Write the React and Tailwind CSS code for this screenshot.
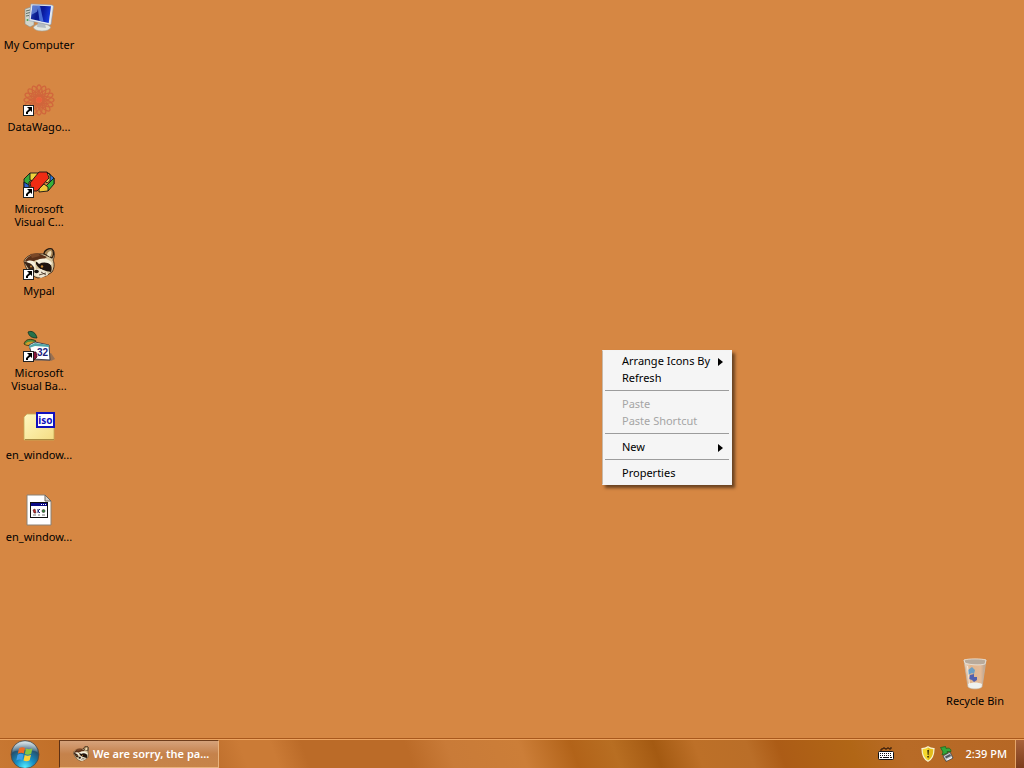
import React from 'react';

/* Small arrow badge on the corner of shortcut icons */
const ShortcutArrow = () => (
  <g>
    <rect x="0.5" y="21.5" width="10" height="10" fill="#fff" stroke="#222" />
    <path d="M4 23h5v5L7.400 26.400 5 28.600V30H3v-2l3-3z" fill="#000" />
  </g>
);

const ComputerIcon = () => (
  <svg width="32" height="32" viewBox="0 0 32 32" aria-hidden="true">
    <defs>
      <linearGradient id="screen" x1="0" y1="0" x2="1" y2="0.25">
        <stop offset="0" stopColor="#2747b8" />
        <stop offset="0.4" stopColor="#0a1a8c" />
        <stop offset="0.65" stopColor="#0a1a9c" />
        <stop offset="1" stopColor="#1438d8" />
      </linearGradient>
    </defs>
    <path d="M2 7l6-2 3 1v17l-4 2-5-3z" fill="#d3d6cc" stroke="#8c8f88" strokeWidth="0.6" />
    <path d="M3 9l4-1M3 11.500l4-1M3 14l3-.5" stroke="#5c6b62" />
    <circle cx="4.500" cy="18" r="1" fill="#45a850" />
    <ellipse cx="19" cy="25.500" rx="8.500" ry="3.500" fill="#e3e6df" stroke="#9da39a" strokeWidth="0.6" />
    <path d="M15 20l7 2 1 4-9-1z" fill="#b4bcc0" />
    <path d="M8 2l21 1 1.500 1-2.500 18.500-1.500.5L6 18.500z" fill="#e2e8ef" stroke="#8a98ac" strokeWidth="0.6" />
    <path d="M9.500 3.500l18.500.8-2.300 16.600L7.800 17z" fill="url(#screen)" />
    <path d="M9.500 3.500l6.500.3-2 6-5.500 3z" fill="#86a8ec" opacity="0.6" />
    <path d="M14.500 3.700l2.500.1 3.500 15.800-4-.8z" fill="#5f8ce8" opacity="0.75" />
  </svg>
);

const AtomIcon = () => (
  <svg width="32" height="32" viewBox="0 0 32 32" aria-hidden="true">
    <g fill="none" stroke="#cf5038" strokeWidth="1.300" opacity="0.6">
      {[0, 22.5, 45, 67.5, 90, 112.5, 135, 157.5].map((angle) => (
        <ellipse key={angle} cx="16" cy="16" rx="15" ry="4" transform={`rotate(${angle} 16 16)`} />
      ))}
      <circle cx="16" cy="16" r="9" strokeDasharray="2 2" />
    </g>
    <circle cx="16" cy="16" r="3" fill="#e8603c" />
    <ShortcutArrow />
  </svg>
);

const VisualCIcon = () => (
  <svg width="32" height="32" viewBox="0 0 32 32" aria-hidden="true">
    <g stroke="#151515" strokeWidth="0.9" strokeLinejoin="round">
      <path d="M7 7L1 13v8l5 3v-8l4-3z" fill="#3aa83a" />
      <path d="M1 16l5 3v5l-5-3z" fill="#2a62d0" />
      <path d="M7 7h8l1 4-5 4-4-1z" fill="#f0d23c" />
      <path d="M20 13l4-6 3 1 1 6-4 3z" fill="#f2d95c" />
      <path d="M24 6l7 6v6l-4-3V9z" fill="#2f78d8" />
      <path d="M31 12v6l-6 7-3-4 5-5z" fill="#37b13a" />
      <path d="M16 22l5-4 4 3v4l-9 1z" fill="#f0c83a" />
      <path d="M16 6h8l2 6-10 11-2 2H9l-2-8z" fill="#ee2c14" />
    </g>
    <ShortcutArrow />
  </svg>
);

const RaccoonHead = () => (
  <g>
    <path d="M1 13c2-5 8-8 20-7 1-4 5-6 8-5 3 2 3 7 1 11 2 4 1 9-1 12l-6 4-8 2C7 28 2 20 1 13z" fill="#d9c7a0" stroke="#2b1b10" strokeWidth="0.8" />
    <path d="M2 13C4 8 11 6 17 6l7 3-3 2-8 1-7 4z" fill="#5c3119" />
    <path d="M7 6l8-1 2 3-8 2z" fill="#7b4827" />
    <path d="M21 6c0-4 5-6 8-5 2 2 2 6 0 9z" fill="#a78658" stroke="#2b1b10" strokeWidth="1.200" />
    <path d="M24 7c0-2 2-4 4-4 1 2 0 4-1 6z" fill="#eadcb8" />
    <path d="M1 14c4-1 8-1 10 2l0 6-4 1z" fill="#3a2417" />
    <path d="M13 14c5-2 10-2 14 2 2 2 2 5 1 8-5-1-12-2-15-8z" fill="#20140e" />
    <path d="M3 14c3-2 7-2 9 1l1 7-3-4c-2-3-4-3-7-4zM13 13c6-4 12-3 16 2l-1 2c-4-3-8-3-12-1z" fill="#f7f0dc" />
    <circle cx="8" cy="18.500" r="1" fill="#c98936" />
    <circle cx="19" cy="18.500" r="1.200" fill="#c98936" />
    <path d="M12 21l6 0 6 3 1 3-7 3-7-3z" fill="#efe6d2" />
    <ellipse cx="13.500" cy="23.500" rx="2.300" ry="1.800" fill="#16100c" />
    <path d="M16 27l7-2M18 24l5 3" fill="none" stroke="#3c2a1c" strokeWidth="0.8" />
  </g>
);

const MypalIcon = () => (
  <svg width="32" height="32" viewBox="0 0 32 32" aria-hidden="true">
    <RaccoonHead />
    <ShortcutArrow />
  </svg>
);

const VisualBasicIcon = () => (
  <svg width="32" height="32" viewBox="0 0 32 32" aria-hidden="true">
    <path d="M8 31l20 0 4-2-4-6z" fill="#70635c" opacity="0.6" />
    <path d="M5 2c4-2 8 1 9 6-4 0-8-1-9-6z" fill="#26714a" stroke="#12301f" strokeWidth="0.8" />
    <path d="M1 14c1-5 7-6 12-3-2 4-8 6-12 3z" fill="#4c8a40" stroke="#3a2c08" strokeWidth="0.8" />
    <path d="M2 14c2-3 7-3 10-2-3 3-7 4-10 2z" fill="#d09a27" />
    <path d="M6 15l6-3 14 3 1 15-17-1z" fill="#fff" stroke="#334" strokeWidth="0.9" />
    <path d="M6 16l6-3 14 2 0 2-14-1-6 2z" fill="#50a6a8" />
    <path d="M9 22l4 0 1 5-3 3z" fill="#8b1237" stroke="#35091b" strokeWidth="0.8" />
    <text x="14" y="26" fontFamily="Liberation Sans, sans-serif" fontWeight="700" fontSize="10" fill="#21217c">32</text>
    <ShortcutArrow />
  </svg>
);

const IsoIcon = () => (
  <svg width="32" height="32" viewBox="0 0 32 32" aria-hidden="true">
    <defs>
      <linearGradient id="folder" x1="0" y1="0" x2="1" y2="1">
        <stop offset="0" stopColor="#fff8c0" />
        <stop offset="1" stopColor="#f4dc83" />
      </linearGradient>
    </defs>
    <path d="M1 28V5l3-3h9l3 3h15v23z" fill="url(#folder)" stroke="#c6a957" strokeWidth="0.8" />
    <path d="M2 27.500h29" stroke="#a88b42" />
    <rect x="14" y="1" width="17" height="14" fill="#fff" stroke="#1111bd" strokeWidth="2" />
    <text x="22.500" y="12" textAnchor="middle" fontFamily="Noto Sans, sans-serif" fontWeight="700" fontSize="10" fill="#1111bd">iso</text>
  </svg>
);

const DocumentIcon = () => (
  <svg width="32" height="32" viewBox="0 0 32 32" aria-hidden="true">
    <path d="M4 1h18l6 6v24H4z" fill="#fff" stroke="#8a8176" />
    <path d="M22 1v6h6z" fill="#d7d3cc" stroke="#6e675f" />
    <rect x="7.500" y="8.500" width="17" height="15" fill="#fff" stroke="#111" />
    <path d="M8 9h16v3H8z" fill="#0b0b86" />
    <path d="M18 10.500h1M20 10.500h1M22 10.500h1" stroke="#fff" />
    <path d="M10 16l2-1 1 4-2 0z" fill="#c02929" stroke="#502020" strokeWidth="0.6" />
    <path d="M15 15v4M17 15l-2 2 2 2" fill="none" stroke="#1b2470" />
    <circle cx="20.500" cy="17" r="1.500" fill="#278a3c" stroke="#402828" strokeWidth="0.6" />
    <path d="M10 21h3M15 21h2M19 21h3" stroke="#777" />
  </svg>
);

const RecycleIcon = () => (
  <svg width="32" height="32" viewBox="0 0 32 32" aria-hidden="true">
    <defs>
      <linearGradient id="glass" x1="0" y1="0" x2="1" y2="0">
        <stop offset="0" stopColor="#f0e9e0" stopOpacity="0.9" />
        <stop offset="0.3" stopColor="#e6c9ac" stopOpacity="0.7" />
        <stop offset="0.75" stopColor="#e9d0ba" stopOpacity="0.7" />
        <stop offset="1" stopColor="#a8998c" stopOpacity="0.95" />
      </linearGradient>
    </defs>
    <path d="M5 2l22 0-4 27c-3 2.500-11 2.500-14 0z" fill="url(#glass)" stroke="#c2b5a7" strokeWidth="0.8" />
    <path d="M5 2c5-1.500 17-1.500 22 0l-1 4c-4 1.500-16 1-20-1z" fill="#b9aa9a" stroke="#eee8df" strokeWidth="0.8" />
    <path d="M9 26c4-2 10-2 14 0l-.5 3c-3 2-10 2-13 0z" fill="#eef1ef" />
    <path d="M9 12l4-3 3 3-1 4-2-1-4 2z" fill="#6d9fc4" />
    <path d="M11 17l4-1 0 3 3 0 0 3-3 2-2-2-3-1z" fill="#5360ae" />
    <path d="M8.500 8l2 18" stroke="#fff" opacity="0.6" />
  </svg>
);

const StartOrb = () => (
  <svg width="30" height="30" viewBox="0 0 30 30" aria-hidden="true">
    <defs>
      <radialGradient id="orb" cx="0.5" cy="0.95" r="0.95">
        <stop offset="0" stopColor="#53edff" />
        <stop offset="0.35" stopColor="#168fc5" />
        <stop offset="0.7" stopColor="#25516f" />
        <stop offset="1" stopColor="#9ab5bd" />
      </radialGradient>
      <linearGradient id="gloss" x1="0" y1="0" x2="0" y2="1">
        <stop offset="0" stopColor="#fff" stopOpacity="0.7" />
        <stop offset="1" stopColor="#fff" stopOpacity="0.1" />
      </linearGradient>
    </defs>
    <circle cx="15" cy="15.500" r="14" fill="url(#orb)" stroke="#5b4638" strokeWidth="0.8" />
    <path d="M2.500 13C3 6 8.500 2.500 15 2.500S27 6 27.500 13c-5-2.500-20-2.500-25 0z" fill="url(#gloss)" />
    <path d="M9 9.500c2-1.500 4-1.500 6-.5l-1.200 5.500c-2-1-4-.8-6 .3z" fill="#ef6a24" />
    <path d="M16 9.500c2 1 4 1 6.500-.3l-1.300 5.500c-2 1.200-4.300 1.200-6.300.2z" fill="#8ac63f" />
    <path d="M7.500 15.800c2-1.200 4-1.200 6-.3l-1.200 5.500c-2-.8-4-.8-6 .4z" fill="#3f9ee8" />
    <path d="M14.700 16c2 1 4 1 6.300-.2l-1.300 5.500c-2 1.200-4.200 1.200-6.200.2z" fill="#fdd137" />
  </svg>
);

const KeyboardIcon = () => (
  <svg width="16" height="16" viewBox="0 0 16 16" role="img" aria-label="Keyboard">
    <path d="M3 5V3h2V2h2v1h2V2h2v1h2V1" fill="none" stroke="#2a1508" />
    <rect x="0.5" y="5.500" width="15" height="8" rx="1" fill="#fff" stroke="#111" />
    <path d="M2 7.500h12M2 9.500h12" stroke="#111" strokeDasharray="1 1" />
    <path d="M2 11.500h2M5 11.500h6M12 11.500h2" stroke="#111" />
  </svg>
);

const ShieldIcon = () => (
  <svg width="14" height="16" viewBox="0 0 14 16" role="img" aria-label="Security alert">
    <path d="M7 .8C5.300 2 3 2.600 1 2.600 1 9 2.500 13 7 15.300 11.500 13 13 9 13 2.600 11 2.600 8.700 2 7 .8z" fill="#f5d82e" stroke="#f7f1d0" strokeWidth="1.200" />
    <path d="M7 1.800v12.400C10.500 12 12 9 12 3.500 10 3.500 8.500 3 7 1.800z" fill="#e2bb1c" />
    <path d="M6.300 4h1.600l-.4 5h-.8zM6.300 10h1.500v1.500H6.300z" fill="#2b2107" />
  </svg>
);

const DeviceIcon = () => (
  <svg width="16" height="16" viewBox="0 0 16 16" role="img" aria-label="Safely remove hardware">
    <path d="M4 10l7-4 3 6-7 3.500z" fill="#c9cdd0" stroke="#3c4247" strokeWidth="0.8" />
    <path d="M6 10.500l5-2.500 1 2-5 2.500z" fill="#4f585e" />
    <path d="M8 14l5-2.500" stroke="#fff" />
    <path d="M1.500 1.500l5-1 .5 2c3-1 5 0 5 3L8 5.500 8.500 7 3 9l1-3z" fill="#32a83c" stroke="#12611b" strokeWidth="0.7" />
  </svg>
);

const desktopItems = [
  { label: 'My Computer', Icon: ComputerIcon },
  { label: 'DataWago...', Icon: AtomIcon },
  { label: 'Microsoft Visual C...', Icon: VisualCIcon },
  { label: 'Mypal', Icon: MypalIcon },
  { label: 'Microsoft Visual Ba...', Icon: VisualBasicIcon },
  { label: 'en_window...', Icon: IsoIcon },
  { label: 'en_window...', Icon: DocumentIcon },
];

const menuGroups = [
  [{ label: 'Arrange Icons By', submenu: true }, { label: 'Refresh' }],
  [{ label: 'Paste', disabled: true }, { label: 'Paste Shortcut', disabled: true }],
  [{ label: 'New', submenu: true }],
  [{ label: 'Properties' }],
];

const DesktopItem = ({ label, Icon }) => (
  <button className="flex h-[82px] w-[78px] flex-col items-center gap-1 pt-[2px] text-[11px] leading-[13px] text-black">
    <Icon />
    <span className="w-[72px] text-center">{label}</span>
  </button>
);

const ContextMenu = () => (
  <div
    role="menu"
    className="absolute left-[602px] top-[350px] min-w-[130px] border border-[#f4f4f4] border-l-[#c9b9a8] bg-[#f5f5f5] px-[2px] py-[2px] text-[11px] shadow-[3px_3px_3px_rgba(0,0,0,0.5)]"
  >
    {menuGroups.map((group, i) => (
      <div key={i} role="group">
        {i > 0 && <hr className="mb-[5px] mt-[3px] border-t border-[#9c9c9c]" />}
        {group.map(({ label, submenu, disabled }) => (
          <button
            key={label}
            role="menuitem"
            disabled={disabled}
            className="flex h-[17px] w-full items-center justify-between gap-2 pl-[17px] pr-[6px] text-black disabled:text-[#a5a5a5]"
          >
            <span className="whitespace-nowrap">{label}</span>
            {submenu && (
              <svg width="5" height="8" viewBox="0 0 5 8" aria-hidden="true">
                <path d="M0 0l5 4-5 4z" fill="#000" />
              </svg>
            )}
          </button>
        ))}
      </div>
    ))}
  </div>
);

const Taskbar = () => (
  <footer className="flex h-[30px] items-stretch border-t border-[#a9581c] bg-[linear-gradient(70deg,#c87833_0%,#c27029_6%,#bb6c2a_20%,#cb7b36_24%,#cb7b36_27%,#bb6b28_30%,#bb6b28_40%,#c97b38_44%,#cc7e38_51%,#b26319_56%,#b86e22_60%,#a45a12_64%,#bd7028_68%,#ba6e28_73%,#ac5c16_76%,#b16616_83%,#b86b27_88%,#b66725_100%)]">
    <div className="flex w-full items-stretch border-t border-[#eda562]">
      <button aria-label="Start" className="flex w-[59px] shrink-0 items-center pl-[10px]">
        <StartOrb />
      </button>
      <button className="flex w-[160px] items-center gap-1 border border-[#e9b27c] border-l-[#5e3013] border-t-[#6e3d1b] bg-linear-to-b from-[#d5a27b] via-[#c5824b] to-[#c78449] pl-[13px] text-[11px] font-semibold text-white">
        <svg width="16" height="16" viewBox="0 0 32 32" aria-hidden="true">
          <RaccoonHead />
        </svg>
        <span className="whitespace-nowrap">We are sorry, the pa...</span>
      </button>
      <div className="ml-auto flex items-center pr-2">
        <KeyboardIcon />
        <div className="ml-[27px] flex items-center gap-1">
          <ShieldIcon />
          <DeviceIcon />
        </div>
        <time className="ml-[10px] whitespace-nowrap text-[11px] font-medium text-white">2:39 PM</time>
      </div>
      <button
        aria-label="Show desktop"
        className="w-[9px] border-l border-[#e5a56a] bg-linear-to-b from-[#a9623a] to-[#7c3d1c]"
      />
    </div>
  </footer>
);

const App = () => (
  <div className="flex min-h-screen flex-col bg-[#d68743] font-['Noto_Sans',sans-serif]">
    <main className="relative flex flex-1 justify-between">
      <nav aria-label="Desktop" className="flex flex-col">
        {desktopItems.map((item, i) => (
          <DesktopItem key={i} {...item} />
        ))}
      </nav>
      <div className="self-end pr-[10px]">
        <DesktopItem label="Recycle Bin" Icon={RecycleIcon} />
      </div>
      <ContextMenu />
    </main>
    <Taskbar />
  </div>
);

export default App;
